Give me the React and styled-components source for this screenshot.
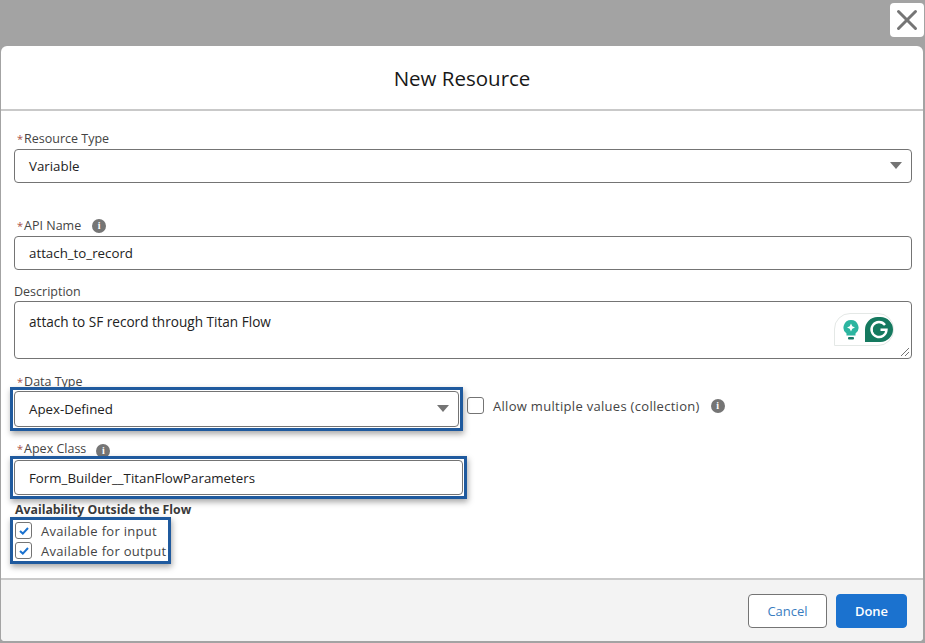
import React from "react";
import styled, { createGlobalStyle } from "styled-components";
import { X } from "lucide-react";

const GlobalStyle = createGlobalStyle`
  html, body {
    margin: 0;
    padding: 0;
    height: 643px;
    overflow: hidden;
    background: #a3a3a3;
    font-family: "Open Sans", "Noto Sans", "Liberation Sans", sans-serif;
    color: #333;
  }
  * { box-sizing: border-box; }
`;

const Page = styled.div`
  width: 925px;
  height: 643px;
  position: relative;
  padding: 46px 2px 2px 1px;
`;

const CloseButton = styled.button`
  position: absolute;
  top: 3px;
  right: 1px;
  width: 34px;
  height: 34px;
  border: 0;
  padding: 0;
  background: #fff;
  border-radius: 4px;
  color: #757575;
  display: flex;
  align-items: center;
  justify-content: center;
`;

const Modal = styled.div`
  height: 100%;
  background: #fff;
  border-radius: 6px 6px 4px 4px;
  display: flex;
  flex-direction: column;
  overflow: hidden;
`;

const Header = styled.div`
  height: 65px;
  flex: none;
  border-bottom: 2px solid #c9c9c9;
  display: flex;
  align-items: center;
  justify-content: center;
`;

const Title = styled.h2`
  margin: 0;
  font-size: 20.5px;
  font-weight: 400;
  color: #181818;
`;

const Body = styled.div`
  flex: 1;
  padding: 20px 11px 0 13px;
`;

const Label = styled.div`
  font-size: 12.5px;
  line-height: 16px;
  height: 16px;
  color: #444;
  display: flex;
  align-items: center;
  margin-top: ${(p) => p.$top || 0}px;
`;

const Required = styled.span`
  color: #a8524a;
  font-size: 11px;
  margin-right: 1px;
  margin-left: 3px;
`;

const Field = styled.div`
  height: ${(p) => p.$height || 34}px;
  margin-top: ${(p) => p.$top ?? 2}px;
  border: 1px solid #747474;
  border-radius: 4px;
  background: #fff;
  font-size: 13.3px;
  color: #222;
  display: flex;
  align-items: center;
  padding: 0 14px;
  position: relative;
`;

const TextArea = styled(Field)`
  align-items: flex-start;
  padding-top: 10px;
  font-size: 13.6px;
`;

const Caret = styled.span`
  position: absolute;
  right: 9px;
  top: 50%;
  margin-top: -4px;
  width: 0;
  height: 0;
  border-left: 6.5px solid transparent;
  border-right: 6.5px solid transparent;
  border-top: 7.5px solid #747474;
`;

const Resize = styled.svg`
  position: absolute;
  right: 1px;
  bottom: 1px;
`;

const GrammarlyBadge = styled.div`
  position: absolute;
  right: 17px;
  top: 11px;
  width: 60px;
  height: 33px;
  border: 1px solid #e4e8e6;
  border-radius: 16px 16px 16px 0;
  background: #fff;
  display: flex;
  align-items: center;
  justify-content: flex-end;
  gap: 6px;
`;

const Highlight = styled.div`
  position: relative;
  border: 3px solid #1f5a9e;
  box-shadow: 1px 3px 6px rgba(0, 0, 0, 0.35);
  padding: 1px;
  width: ${(p) => p.$width}px;
  margin-left: -4px;
  margin-top: ${(p) => p.$top || 0}px;
  flex: none;
`;

const TypeRow = styled.div`
  display: flex;
  align-items: center;
  margin-top: -3px;
`;

const CheckRow = styled.label`
  display: flex;
  align-items: center;
  height: 17px;
  font-size: 13px;
  color: #444;
  letter-spacing: 0.3px;
  & + & {
    margin-top: 3px;
  }
`;

const Box = styled.span`
  width: 17px;
  height: 17px;
  flex: none;
  border: 1px solid #747474;
  border-radius: 3px;
  background: #fff;
  display: flex;
  align-items: center;
  justify-content: center;
  margin-right: 9px;
`;

const Collection = styled.div`
  display: flex;
  align-items: center;
  margin-left: 4px;
  margin-bottom: 7px;
`;

const InfoDot = styled.span`
  width: 14px;
  height: 14px;
  border-radius: 50%;
  background: #757575;
  color: #fff;
  font-family: "Liberation Serif", serif;
  font-size: 10px;
  font-weight: 700;
  line-height: 14px;
  text-align: center;
  margin-left: ${(p) => p.$left || 9}px;
  transform: translateY(${(p) => p.$drop || 0}px);
  flex: none;
  letter-spacing: 0;
`;

const Section = styled.div`
  font-size: 12.3px;
  font-weight: 700;
  line-height: 16px;
  color: #3a3a3a;
  margin-top: 3px;
  margin-left: 1px;
`;

const CheckGroup = styled.div`
  border: 3px solid #1f5a9e;
  box-shadow: 1px 3px 6px rgba(0, 0, 0, 0.35);
  width: 161px;
  height: 47px;
  margin-top: -1px;
  margin-left: -4px;
  padding: 2px 0 0 2px;
`;

const Footer = styled.div`
  height: 63px;
  flex: none;
  background: #f3f3f3;
  border-top: 2px solid #c9c9c9;
  display: flex;
  align-items: center;
  justify-content: flex-end;
  gap: 9px;
  padding: 0 16px 0 0;
`;

const Button = styled.button`
  width: ${(p) => p.$width}px;
  height: 34px;
  border-radius: 4px;
  font-family: inherit;
  font-size: 13px;
  font-weight: ${(p) => (p.$primary ? 600 : 400)};
  border: 1px solid ${(p) => (p.$primary ? "#1b72cf" : "#747474")};
  background: ${(p) => (p.$primary ? "#1b72cf" : "#fff")};
  color: ${(p) => (p.$primary ? "#fff" : "#3a7dbf")};
`;

const Check = () => (
  <svg width="10" height="8" viewBox="0 0 10 8">
    <path d="M1 4 L3.800 6.600 L9 1" fill="none" stroke="#1b72cf" strokeWidth="2" />
  </svg>
);

const Grammarly = () => (
  <>
    <svg width="16" height="20" viewBox="0 0 16 20">
      <path d="M8 0a7.500 7.500 0 0 0-4.500 13.500V15.500h9v-2A7.500 7.500 0 0 0 8 0z" fill="#2cb5a0" />
      <path d="M8 3.500l1.300 2.700L12 7.500 9.300 8.800 8 11.500 6.700 8.800 4 7.500 6.700 6.200z" fill="#fff" />
      <rect x="5" y="17" width="6" height="2.500" rx="1" fill="#177a68" />
    </svg>
    <svg width="28" height="25" viewBox="0 0 28 25">
      <path d="M15.500 0a12.500 12.500 0 0 1 0 25H0V12.500A12.500 12.500 0 0 1 12.500 0z" fill="#15795f" />
      <path d="M20 8a7.500 7.500 0 1 0 1.500 4.800h-6" fill="none" stroke="#fff" strokeWidth="2.400" />
    </svg>
  </>
);

const App = () => (
  <>
    <GlobalStyle />
    <Page>
      <CloseButton aria-label="Close">
        <X size={34} strokeWidth={2.1} />
      </CloseButton>
      <Modal>
        <Header>
          <Title>New Resource</Title>
        </Header>
        <Body>
          <Label>
            <Required>*</Required>Resource Type
          </Label>
          <Field>
            Variable
            <Caret />
          </Field>
          <Label $top={35}>
            <Required>*</Required>API Name
            <InfoDot $left={11}>i</InfoDot>
          </Label>
          <Field>attach_to_record</Field>
          <Label $top={14}>Description</Label>
          <TextArea $height={58} $top={1}>
            attach to SF record through Titan Flow
            <GrammarlyBadge>
              <Grammarly />
            </GrammarlyBadge>
            <Resize width="10" height="10" viewBox="0 0 10 10">
              <path d="M1 9 L9 1 M5 9 L9 5" stroke="#747474" strokeWidth="1" />
            </Resize>
          </TextArea>
          <Label $top={15}>
            <Required>*</Required>Data Type
          </Label>
          <TypeRow>
            <Highlight $width={453}>
              <Field $height={36} $top={0}>
                Apex-Defined
                <Caret />
              </Field>
            </Highlight>
            <Collection>
              <Box />
              <CheckRow as="div">
                Allow multiple values (collection)
                <InfoDot $left={11}>i</InfoDot>
              </CheckRow>
            </Collection>
          </TypeRow>
          <Label $top={10}>
            <Required>*</Required>Apex Class
            <InfoDot $left={10} $drop={2}>i</InfoDot>
          </Label>
          <Highlight $width={457} $top={-1}>
            <Field $height={35} $top={0}>Form_Builder__TitanFlowParameters</Field>
          </Highlight>
          <Section>Availability Outside the Flow</Section>
          <CheckGroup>
            <CheckRow>
              <Box>
                <Check />
              </Box>
              Available for input
            </CheckRow>
            <CheckRow>
              <Box>
                <Check />
              </Box>
              Available for output
            </CheckRow>
          </CheckGroup>
        </Body>
        <Footer>
          <Button $width={79}>Cancel</Button>
          <Button $primary $width={71}>Done</Button>
        </Footer>
      </Modal>
    </Page>
  </>
);

export default App;
